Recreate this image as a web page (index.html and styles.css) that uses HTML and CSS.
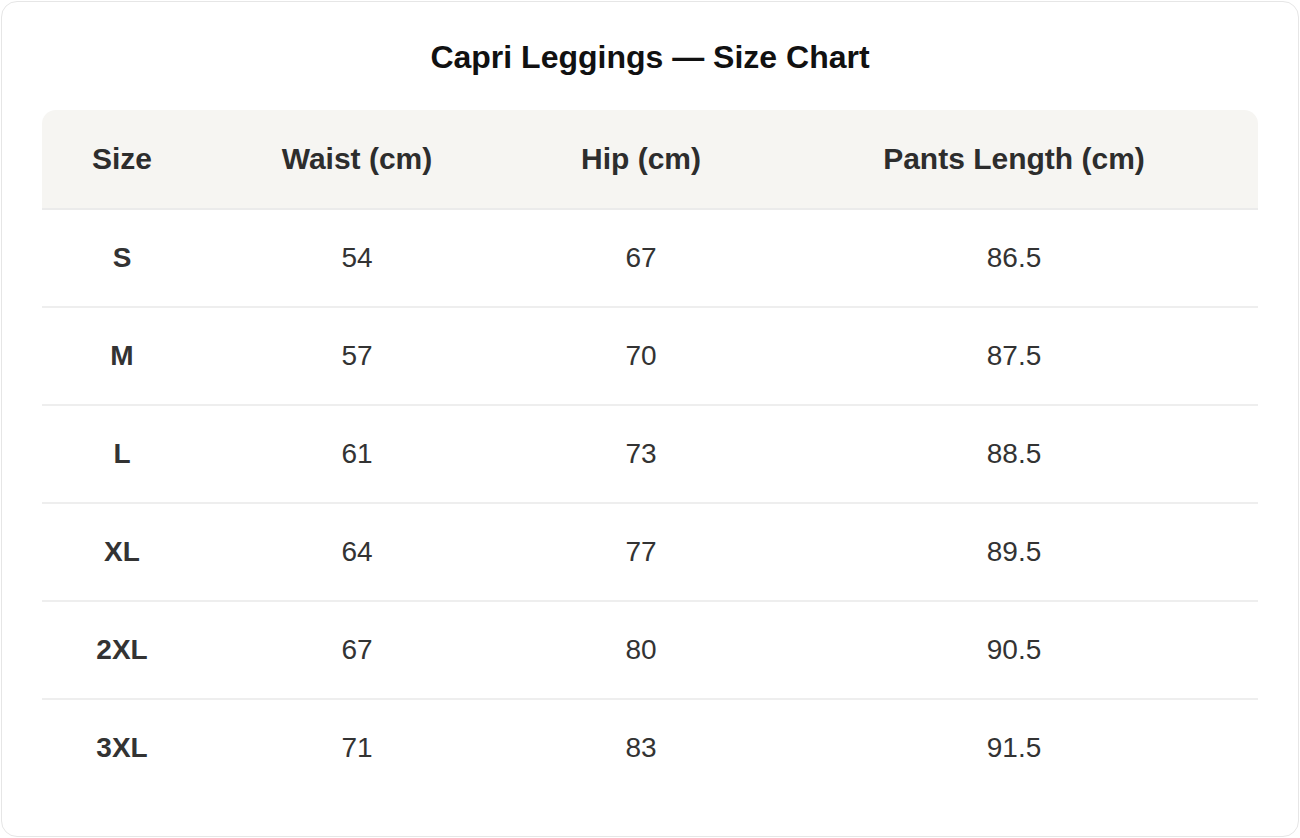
FILE: index.html
```html
<!DOCTYPE html>
<html lang="en">
<head>
<meta charset="utf-8">
<title>Capri Leggings — Size Chart</title>
<link rel="stylesheet" href="styles.css">
</head>
<body>
<div class="page">
  <div class="card">
    <h1 class="title">Capri Leggings — Size Chart</h1>
    <table class="chart">
      <colgroup>
        <col class="c1"><col class="c2"><col class="c3"><col class="c4">
      </colgroup>
      <thead>
        <tr><th>Size</th><th>Waist (cm)</th><th>Hip (cm)</th><th>Pants Length (cm)</th></tr>
      </thead>
      <tbody>
        <tr><td class="size">S</td><td>54</td><td>67</td><td>86.5</td></tr>
        <tr><td class="size">M</td><td>57</td><td>70</td><td>87.5</td></tr>
        <tr><td class="size">L</td><td>61</td><td>73</td><td>88.5</td></tr>
        <tr><td class="size">XL</td><td>64</td><td>77</td><td>89.5</td></tr>
        <tr><td class="size">2XL</td><td>67</td><td>80</td><td>90.5</td></tr>
        <tr><td class="size">3XL</td><td>71</td><td>83</td><td>91.5</td></tr>
      </tbody>
    </table>
  </div>
</div>
</body>
</html>
```
FILE: styles.css
```css
html, body {
  margin: 0;
  padding: 0;
  background: #ffffff;
}
body {
  font-family: "Liberation Sans", Arial, sans-serif;
  color: #333333;
}
.page {
  padding: 1px;
}
.card {
  box-sizing: border-box;
  height: 836px;
  border: 1px solid #e6e6e6;
  border-radius: 16px;
  padding: 35px 40px 0 40px;
  background: #ffffff;
}
.title {
  margin: 0 0 33px 0;
  text-align: center;
  font-size: 32px;
  line-height: 40px;
  font-weight: 700;
  color: #111111;
}
.chart {
  width: 1216px;
  border-collapse: separate;
  border-spacing: 0;
  table-layout: fixed;
}
.c1 { width: 160px; }
.c2 { width: 310px; }
.c3 { width: 258px; }
.c4 { width: 488px; }
.chart th {
  height: 98px;
  padding: 0;
  background: #f6f5f2;
  border-bottom: 2px solid #ebebeb;
  font-size: 30px;
  font-weight: 700;
  color: #2d2d2d;
  text-align: center;
}
.chart th:first-child { border-top-left-radius: 14px; }
.chart th:last-child { border-top-right-radius: 14px; }
.chart td {
  height: 96px;
  padding: 0;
  border-bottom: 2px solid #eeeeee;
  font-size: 28px;
  color: #333333;
  text-align: center;
}
.chart tbody tr:last-child td {
  border-bottom: none;
}
.chart td.size {
  font-weight: 700;
}
```
